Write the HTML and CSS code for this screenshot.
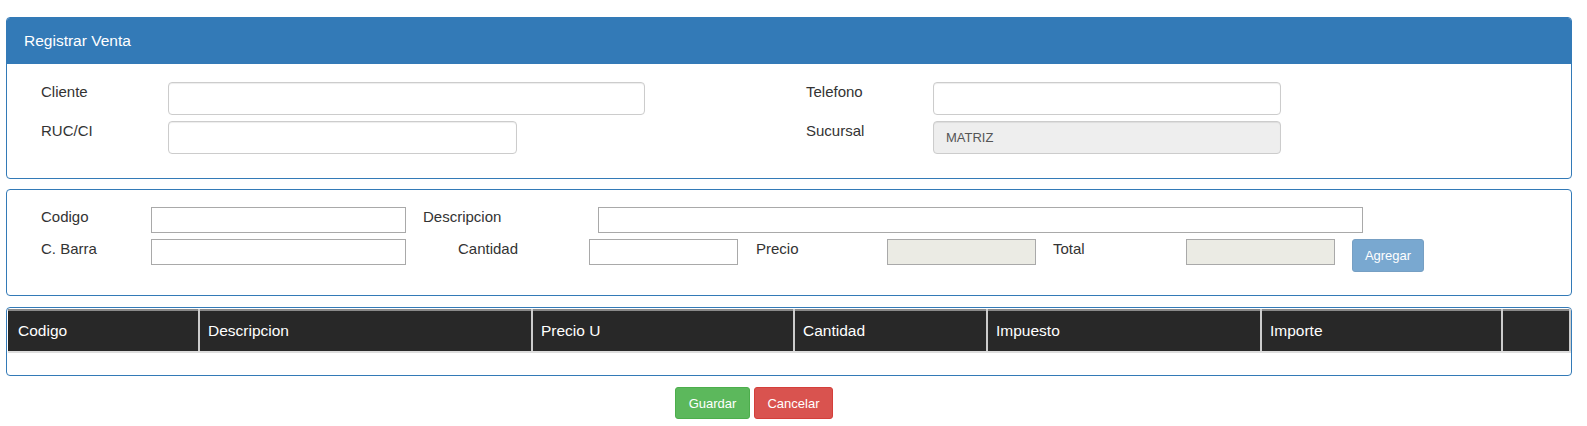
FILE: index.html
```html
<!DOCTYPE html>
<html lang="es">
<head>
<meta charset="utf-8">
<title>Registrar Venta</title>
<link rel="stylesheet" href="styles.css">
</head>
<body>
<div class="page">
  <section class="panel panel-primary">
    <div class="panel-heading">Registrar Venta</div>
    <div class="panel-body client-grid">
      <label class="lbl">Cliente</label>
      <input class="form-control w-wide" type="text">
      <span></span>
      <label class="lbl">Telefono</label>
      <input class="form-control w-right" type="text">

      <label class="lbl">RUC/CI</label>
      <input class="form-control w-ruc" type="text">
      <span></span>
      <label class="lbl">Sucursal</label>
      <input class="form-control w-right" type="text" value="MATRIZ" disabled>
    </div>
  </section>

  <section class="panel product-panel">
    <div class="prod-row row-1">
      <label class="lbl c-lbl-1">Codigo</label>
      <input class="plain w-code" type="text">
      <label class="lbl c-desc">Descripcion</label>
      <input class="plain w-desc" type="text">
    </div>
    <div class="prod-row row-2">
      <label class="lbl c-lbl-1">C. Barra</label>
      <input class="plain w-code" type="text">
      <label class="lbl c-cant">Cantidad</label>
      <input class="plain w-small" type="text">
      <label class="lbl c-precio">Precio</label>
      <input class="plain w-small" type="text" disabled>
      <label class="lbl c-total">Total</label>
      <input class="plain w-small" type="text" disabled>
      <button class="btn btn-primary btn-disabled" type="button">Agregar</button>
    </div>
  </section>

  <section class="panel table-panel">
    <table class="grid">
      <thead>
        <tr>
          <th class="col-1">Codigo</th>
          <th class="col-2">Descripcion</th>
          <th class="col-3">Precio U</th>
          <th class="col-4">Cantidad</th>
          <th class="col-5">Impuesto</th>
          <th class="col-6">Importe</th>
          <th class="col-7"></th>
        </tr>
      </thead>
      <tbody>
        <tr class="empty-row"><td colspan="7"></td></tr>
      </tbody>
    </table>
  </section>

  <div class="actions">
    <button class="btn btn-success" type="button">Guardar</button>
    <button class="btn btn-danger" type="button">Cancelar</button>
  </div>
</div>
</body>
</html>
```

FILE: styles.css
```css
* { box-sizing: border-box; }

html, body {
  margin: 0;
  padding: 0;
  background: #fff;
}

body {
  font-family: "Liberation Sans", Arial, Helvetica, sans-serif;
  font-size: 15px;
  color: #333;
}

.page {
  width: 1566px;
  margin-left: 6px;
  padding-top: 17px;
}

.panel {
  border: 1px solid #337ab7;
  border-radius: 4px;
  background: #fff;
}

.panel-heading {
  background: #337ab7;
  color: #fff;
  font-size: 15.5px;
  line-height: 22px;
  padding: 12px 17px;
  border-radius: 3px 3px 0 0;
}

.panel-body {
  padding: 18px 0 24px 34px;
}

.client-grid {
  display: grid;
  grid-template-columns: 127px 477px 161px 127px 348px;
  row-gap: 6px;
  align-items: start;
}

.lbl {
  font-size: 15px;
  line-height: 20px;
  color: #333;
  white-space: nowrap;
}

.form-control {
  height: 33px;
  border: 1px solid #ccc;
  border-radius: 4px;
  box-shadow: inset 0 1px 1px rgba(0, 0, 0, .075);
  padding: 6px 12px;
  font-family: "Liberation Sans", Arial, sans-serif;
  font-size: 13px;
  color: #555;
  background: #fff;
}

.form-control:disabled {
  background: #eee;
  color: #555;
}

.w-wide { width: 477px; }
.w-ruc { width: 349px; }
.w-right { width: 348px; }

/* product panel */
.product-panel {
  margin-top: 10px;
  padding: 17px 0 23px 34px;
}

.prod-row {
  display: flex;
  align-items: flex-start;
}

.row-1 { height: 26px; }
.row-2 { margin-top: 6px; height: 33px; }

.plain {
  height: 26px;
  border: 1px solid #a9a9a9;
  border-radius: 0;
  background: #fff;
  padding: 1px 3px;
  font-family: "Liberation Sans", Arial, sans-serif;
  font-size: 13px;
}

.plain:disabled {
  background: #ebebe4;
  border-color: #a9a9a9;
}

.c-lbl-1 { width: 110px; }
.c-desc { width: 175px; margin-left: 17px; }
.c-cant { width: 131px; margin-left: 52px; }
.c-precio { width: 131px; margin-left: 18px; }
.c-total { width: 133px; margin-left: 17px; }

.w-code { width: 255px; }
.w-desc { width: 765px; }
.w-small { width: 149px; }

.btn {
  font-family: "Liberation Sans", Arial, sans-serif;
  font-size: 13px;
  line-height: 19px;
  padding: 6px 12px;
  border: 1px solid transparent;
  border-radius: 3px;
  color: #fff;
  cursor: pointer;
}

.btn-primary {
  background: #337ab7;
  border-color: #2e6da4;
}

.btn-disabled {
  opacity: .65;
  margin-left: 17px;
  width: 72px;
  height: 33px;
  padding: 6px 0;
}

.btn-success {
  background: #5cb85c;
  border-color: #4cae4c;
  width: 75px;
  height: 32px;
  padding: 6px 0;
}

.btn-danger {
  background: #d9534f;
  border-color: #d43f3a;
  width: 79px;
  height: 32px;
  padding: 6px 0;
}

/* table */
.table-panel {
  margin-top: 11px;
  padding: 1px;
}

.grid {
  width: 1562px;
  border-collapse: collapse;
  table-layout: fixed;
}

.grid th {
  background: #282828;
  color: #fff;
  font-weight: normal;
  font-size: 15.5px;
  text-align: left;
  line-height: 20px;
  height: 42px;
  padding: 9px 8px;
  border-top: 2px solid #8a8a8a;
  border-bottom: 2px solid #ddd;
  border-left: 2px solid #ccc;
  border-right: 2px solid #ccc;
}

.grid th.col-1 { border-left: 0; padding-left: 10px; }

.col-1 { width: 191px; }
.col-2 { width: 333px; }
.col-3 { width: 262px; }
.col-4 { width: 193px; }
.col-5 { width: 274px; }
.col-6 { width: 241px; }
.col-7 { width: 68px; }

.empty-row td {
  height: 22px;
  padding: 0;
}

.actions {
  display: flex;
  gap: 4px;
  margin-top: 11px;
  padding-left: 669px;
}
```
